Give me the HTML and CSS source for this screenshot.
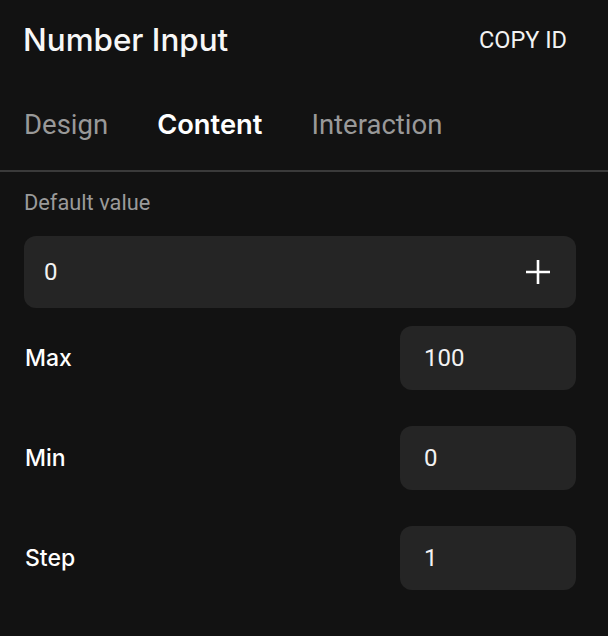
FILE: index.html
```html
<!DOCTYPE html>
<html>
<head>
<meta charset="utf-8">
<link rel="stylesheet" href="styles.css">
</head>
<body>
<div class="panel">
  <div class="header">
    <div class="title">Number Input</div>
    <div class="copy">COPY ID</div>
  </div>
  <div class="tabs">
    <div class="tab">Design</div>
    <div class="tab active">Content</div>
    <div class="tab">Interaction</div>
  </div>
  <div class="content">
    <div class="field-label">Default value</div>
    <div class="big-input">
      <span class="value">0</span>
      <svg class="plus" width="24" height="24" viewBox="0 0 24 24"><path d="M12 0V24M0 12H24" stroke="#ffffff" stroke-width="2.6" fill="none"/></svg>
    </div>
    <div class="row">
      <div class="row-label">Max</div>
      <div class="small-input"><span class="value">100</span></div>
    </div>
    <div class="row">
      <div class="row-label">Min</div>
      <div class="small-input"><span class="value">0</span></div>
    </div>
    <div class="row">
      <div class="row-label">Step</div>
      <div class="small-input"><span class="value">1</span></div>
    </div>
  </div>
</div>
</body>
</html>
```

FILE: styles.css
```css
html, body {
  margin: 0;
  padding: 0;
  background: #121212;
}
body {
  width: 608px;
  height: 636px;
  overflow: hidden;
  color: #ffffff;
  font-family: Roboto, "Liberation Sans", sans-serif;
}
.header {
  display: flex;
  justify-content: space-between;
  align-items: center;
  height: 80px;
  padding: 0 41px 0 24px;
}
.title {
  font-family: Inter, Roboto, sans-serif;
  font-weight: 500;
  font-size: 31.4px;
  line-height: 36px;
  color: #f7f7f7;
  margin-left: -1px;
}
.copy {
  font-family: Roboto, sans-serif;
  font-size: 23.5px;
  line-height: 28px;
  color: #f2f2f2;
}
.tabs {
  display: flex;
  align-items: center;
  gap: 49px;
  height: 90px;
  padding: 0 24px;
  border-bottom: 2px solid #3a3a3a;
}
.tab {
  font-family: Roboto, sans-serif;
  font-size: 27.5px;
  line-height: 32px;
  color: #999999;
}
.tab.active {
  font-family: Inter, Roboto, sans-serif;
  font-weight: 600;
  font-size: 27.3px;
  color: #ffffff;
}
.content {
  padding: 0 32px 0 24px;
  display: flex;
  flex-direction: column;
}
.field-label {
  margin-top: 19px;
  font-size: 21.8px;
  line-height: 24px;
  color: #9a9a9a;
}
.big-input {
  margin-top: 21px;
  height: 72px;
  border-radius: 12px;
  background: #252525;
  display: flex;
  align-items: center;
  justify-content: space-between;
  padding: 0 26px 0 20px;
}
.value {
  font-family: Roboto, sans-serif;
  font-size: 24px;
  line-height: 28px;
  color: #f2f2f2;
}
.plus {
  display: block;
}
.row {
  display: flex;
  align-items: center;
  justify-content: space-between;
  height: 64px;
  margin-top: 18px;
}
.row + .row {
  margin-top: 36px;
}
.row-label {
  font-family: Inter, Roboto, sans-serif;
  font-weight: 500;
  font-size: 23px;
  line-height: 28px;
  color: #ffffff;
  margin-left: 1px;
}
.small-input {
  width: 176px;
  height: 64px;
  box-sizing: border-box;
  border-radius: 12px;
  background: #252525;
  display: flex;
  align-items: center;
  padding: 0 24px;
}
```
